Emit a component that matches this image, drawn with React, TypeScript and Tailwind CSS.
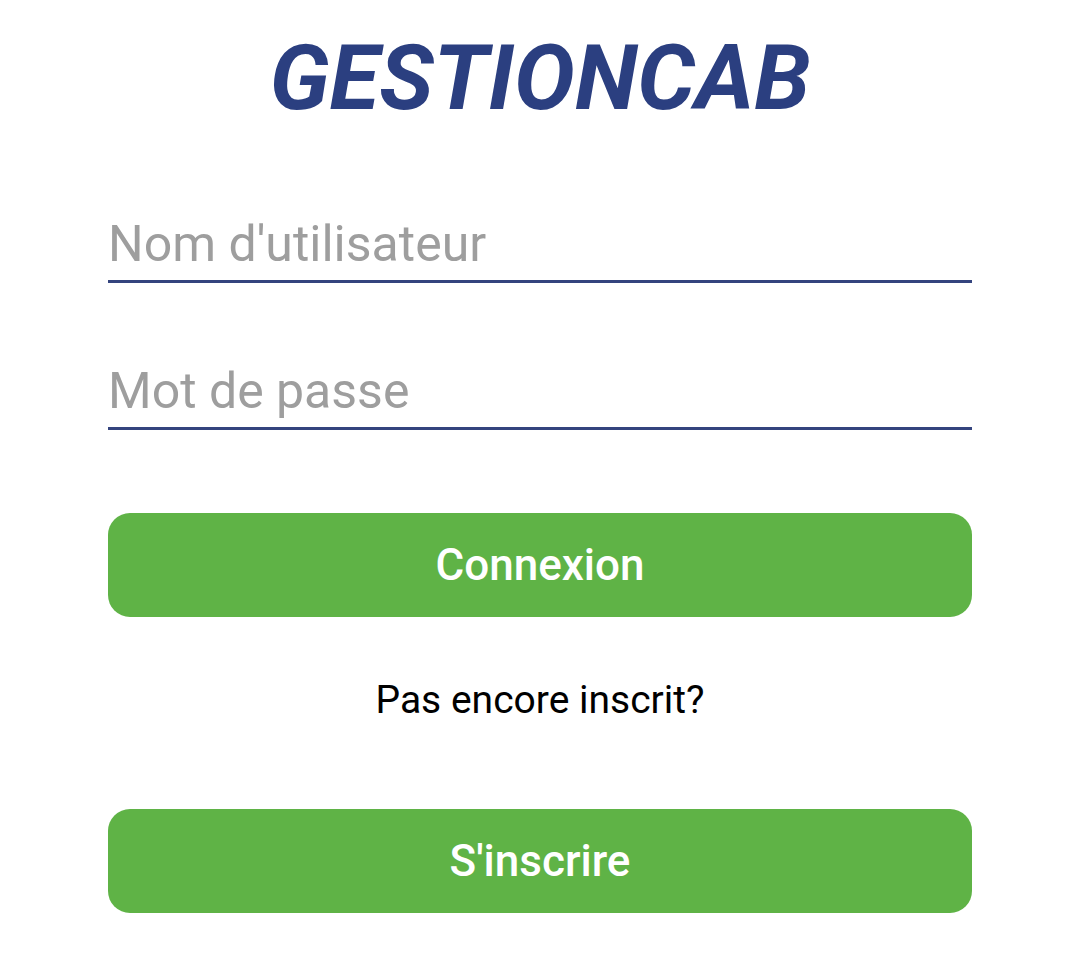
import { useState } from "react";

export default function App() {
  const [username, setUsername] = useState("");
  const [password, setPassword] = useState("");

  return (
    <div className="min-h-[955px] w-full bg-white font-['Roboto',sans-serif]">
      <div className="flex flex-col px-[108px] pt-[33px]">
        <h1 className="text-center text-[91px] font-bold italic leading-none text-[#2b3f80]">
          GESTIONCAB
        </h1>

        <input
          type="text"
          value={username}
          onChange={(e) => setUsername(e.target.value)}
          placeholder="Nom d'utilisateur"
          className="mt-[91px] w-full border-b-[3px] border-[#34447e] bg-transparent pb-[7px] text-[50px] leading-[50px] text-[#222] outline-none placeholder:text-[#9e9e9e]"
        />

        <input
          type="password"
          value={password}
          onChange={(e) => setPassword(e.target.value)}
          placeholder="Mot de passe"
          className="mt-[79px] w-full border-b-[3px] border-[#34447e] bg-transparent pb-[7px] text-[50px] leading-[50px] text-[#222] outline-none placeholder:text-[#9e9e9e]"
        />

        <button
          type="button"
          className="mt-[83px] flex h-[104px] w-full items-center justify-center rounded-[22px] bg-[#5fb346] text-[44px] font-medium text-white"
        >
          Connexion
        </button>

        <p className="mt-[64px] text-center text-[39px] leading-none text-black">
          Pas encore inscrit?
        </p>

        <button
          type="button"
          className="mt-[89px] flex h-[104px] w-full items-center justify-center rounded-[22px] bg-[#5fb346] text-[44px] font-medium text-white"
        >
          S'inscrire
        </button>
      </div>
    </div>
  );
}
